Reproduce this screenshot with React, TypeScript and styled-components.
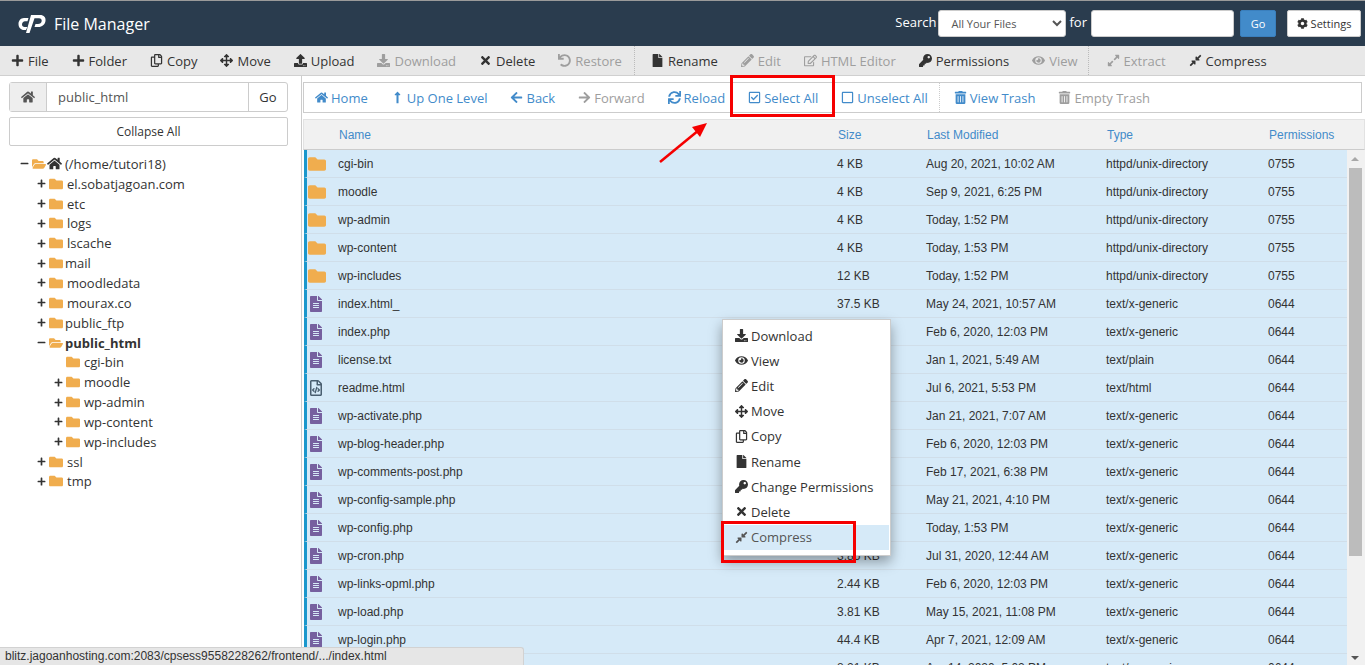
import { ReactNode } from "react";
import styled, { createGlobalStyle } from "styled-components";
import {
  FaArrowLeft, FaArrowRight, FaArrowsAlt, FaCog, FaCompressAlt, FaDownload, FaExpandAlt, FaEye,
  FaFile, FaFileAlt, FaFolder, FaFolderOpen, FaHome, FaKey, FaLongArrowAltUp, FaMinus, FaPencilAlt,
  FaPlus, FaRegCheckSquare, FaRegCopy, FaRegEdit, FaRegFileCode, FaRegSquare, FaSync, FaTimes,
  FaTrashAlt, FaUndo, FaUpload,
} from "react-icons/fa";

const GlobalStyle = createGlobalStyle`
  html, body { margin: 0; padding: 0; height: 665px; overflow: hidden; background: #fff; }
  body { font-family: "Open Sans", "Liberation Sans", sans-serif; font-size: 13px; color: #333; }
  * { box-sizing: border-box; }
`;

const Page = styled.div`
  position: relative;
  width: 1365px;
  height: 665px;
  overflow: hidden;
  display: flex;
  flex-direction: column;
`;

const Header = styled.header`
  height: 46px;
  flex: none;
  border-top: 1px solid #9a9a9a;
  background: #2a3c4e;
  display: flex;
  align-items: center;
  padding: 0 4px 0 18px;
  color: #fff;
`;

const Logo = styled.svg`
  width: 28px;
  height: 20px;
  margin-right: 8px;
`;

const Title = styled.div`
  font-size: 16px;
  flex: 1;
`;

const SearchLabel = styled.label`
  font-size: 13px;
  margin-top: -3px;
`;

const SearchSelect = styled.select`
  width: 128px;
  height: 27px;
  margin: 0 3px 0 2px;
  padding-left: 8px;
  border: 1px solid #ccc;
  border-radius: 3px;
  background: #fff;
  color: #555;
  font: 11px "Open Sans", sans-serif;
`;

const SearchInput = styled.input`
  width: 143px;
  height: 27px;
  margin: 0 6px 0 4px;
  border: 1px solid #ccc;
  border-radius: 3px;
`;

const HeaderButton = styled.button<{ $primary?: boolean }>`
  height: 27px;
  display: flex;
  align-items: center;
  justify-content: center;
  gap: 3px;
  border-radius: 2px;
  border: 1px solid ${(p) => (p.$primary ? "#3a7fbd" : "#ccc")};
  background: ${(p) => (p.$primary ? "#428bca" : "#fff")};
  color: ${(p) => (p.$primary ? "#fff" : "#333")};
  font: 11px "Open Sans", sans-serif;
  width: ${(p) => (p.$primary ? "36px" : "74px")};
  margin-right: ${(p) => (p.$primary ? "11px" : "0")};
  padding: 0;
`;

const Toolbar = styled.nav`
  height: 30px;
  flex: none;
  background: #e8e8e8;
  border-bottom: 1px solid #d0d0d0;
  display: flex;
  align-items: center;
  padding-left: 11px;
`;

const ToolItem = styled.span<{ $disabled?: boolean; $gap?: number }>`
  display: inline-flex;
  align-items: center;
  gap: 4px;
  margin-right: ${(p) => p.$gap ?? 23}px;
  color: ${(p) => (p.$disabled ? "#9e9e9e" : "#333")};
  white-space: nowrap;
  svg { font-size: 13px; flex: none; }
`;

const ToolDivider = styled.span<{ $gap: number }>`
  align-self: stretch;
  width: 0;
  border-left: 1px dotted #bbb;
  margin-right: ${(p) => p.$gap}px;
`;

const Main = styled.main`
  flex: 1;
  min-height: 0;
  display: flex;
`;

const Sidebar = styled.aside`
  width: 302px;
  flex: none;
  padding: 6px 13px 0 9px;
  border-right: 1px solid #ccc;
`;

const PathBar = styled.div`
  height: 30px;
  display: flex;
  border: 1px solid #ccc;
  border-radius: 3px;
`;

const PathIcon = styled.span`
  width: 37px;
  background: #eee;
  border-right: 1px solid #ccc;
  display: flex;
  align-items: center;
  justify-content: center;
  color: #555;
  font-size: 14px;
`;

const PathValue = styled.span`
  flex: 1;
  padding-left: 11px;
  line-height: 28px;
  color: #555;
`;

const PathGo = styled.span`
  width: 39px;
  border-left: 1px solid #ccc;
  text-align: center;
  line-height: 28px;
`;

const CollapseButton = styled.div`
  height: 29px;
  margin-top: 5px;
  border: 1px solid #ccc;
  border-radius: 2px;
  text-align: center;
  line-height: 27px;
  font-size: 12px;
`;

const Tree = styled.ul`
  list-style: none;
  margin: 8px 0 0;
  padding: 0;
`;

const TreeRow = styled.li<{ $level: number }>`
  height: 19.85px;
  display: flex;
  align-items: center;
  padding-left: ${(p) => 12 + p.$level * 17 - 9}px;
  white-space: nowrap;
`;

const Toggle = styled.span`
  width: 12px;
  flex: none;
  display: flex;
  font-size: 9px;
  color: #333;
  margin-left: 8px;
`;

const FolderIcon = styled.span`
  display: flex;
  color: #f0ad4e;
  font-size: 14px;
  flex: none;
`;

const HomeGlyph = styled.span`
  display: flex;
  color: #333;
  font-size: 15px;
  margin: 0 3px 0 1px;
`;

const TreeLabel = styled.span<{ $bold?: boolean; $tight?: boolean }>`
  margin-left: ${(p) => (p.$tight ? 2 : 4)}px;
  font-weight: ${(p) => (p.$bold ? 700 : 400)};
`;

const Content = styled.section`
  flex: 1;
  min-width: 0;
  padding: 6px 3px 0 1px;
  display: flex;
  flex-direction: column;
`;

const NavBar = styled.nav`
  height: 31px;
  flex: none;
  border: 1px solid #ccc;
  display: flex;
  align-items: center;
  padding-left: 11px;
`;

const NavItem = styled.span<{ $disabled?: boolean; $gap?: number; $marked?: boolean }>`
  position: relative;
  display: inline-flex;
  align-items: center;
  gap: 3px;
  margin-right: ${(p) => p.$gap ?? 23}px;
  color: ${(p) => (p.$disabled ? "#9e9e9e" : "#428bca")};
  white-space: nowrap;
  svg { font-size: 13px; flex: none; }
  ${(p) =>
    p.$marked &&
    `&::after {
      content: "";
      position: absolute;
      left: -18px;
      top: -14px;
      width: 99px;
      height: 36px;
      border: 3px solid #f50000;
    }`}
`;

const NavDivider = styled.span`
  align-self: stretch;
  border-left: 1px dotted #ccc;
  margin: 0 14px 0 -12px;
`;

const HeadRow = styled.div`
  height: 31px;
  flex: none;
  margin-top: 6px;
  margin-right: -3px;
  background: #f1f1f1;
  border: 1px solid #e2e2e2;
  border-bottom: 1px solid #ccc;
`;

const Columns = styled.div`
  display: grid;
  grid-template-columns: 35px 499px 89px 180px 162px 1fr;
  align-items: center;
  height: 100%;
  font-family: "Liberation Sans", Arial, sans-serif;
  font-size: 12px;
`;

const HeadCell = styled.span`
  color: #428bca;
  grid-column: auto;
`;

const Body = styled.div`
  flex: 1;
  min-height: 0;
  display: flex;
  overflow: hidden;
  margin-right: -3px;
`;

const Rows = styled.div`
  flex: 1;
  min-width: 0;
  padding-left: 1px;
`;

const Row = styled.div`
  height: 28px;
  background: #d6eaf8;
  border-bottom: 1px solid #d0dee9;
  border-left: 3px solid #1a97cc;
  margin-right: 0;
`;

const RowColumns = styled(Columns)`
  grid-template-columns: 31px 499px 89px 180px 162px 1fr;
`;

const RowIcon = styled.span<{ $kind: string }>`
  display: flex;
  font-size: ${(p) => (p.$kind === "dir" ? 18 : 16)}px;
  padding-left: 1px;
  color: ${(p) => (p.$kind === "dir" ? "#f0ad4e" : p.$kind === "code" ? "#4a5f70" : "#76609f")};
`;

const Scrollbar = styled.div`
  width: 18px;
  flex: none;
  background: #f1f1f1;
  display: flex;
  flex-direction: column;
  align-items: center;
  position: relative;
  padding: 18px 2px 0 0;
`;

const ScrollThumb = styled.div`
  width: 13px;
  height: 388px;
  background: #bcbcbc;
`;

const ScrollArrow = styled.span<{ $down?: boolean }>`
  position: absolute;
  left: 4px;
  ${(p) => (p.$down ? "bottom: 5px;" : "top: 7px;")}
  border-left: 4px solid transparent;
  border-right: 4px solid transparent;
  ${(p) => (p.$down ? "border-top: 4px solid #555;" : "border-bottom: 4px solid #a8a8a8;")}
`;

const ContextMenu = styled.ul`
  position: absolute;
  left: 722px;
  top: 319px;
  width: 169px;
  height: 237px;
  margin: 0;
  padding: 3px 1px 0;
  list-style: none;
  background: #fff;
  border: 1px solid #ccc;
  box-shadow: 0 6px 12px rgba(0, 0, 0, 0.35);
`;

const MenuItem = styled.li<{ $active?: boolean }>`
  position: relative;
  height: 25.2px;
  display: flex;
  align-items: center;
  gap: 3px;
  padding-left: 11px;
  color: ${(p) => (p.$active ? "#555" : "#333")};
  background: ${(p) => (p.$active ? "#d6eaf8" : "transparent")};
  svg { font-size: 13px; flex: none; }
  ${(p) =>
    p.$active &&
    `&::after {
      content: "";
      position: absolute;
      left: -3px;
      top: -4px;
      width: 129px;
      height: 36px;
      border: 3px solid #f50000;
    }`}
`;

const Arrow = styled.svg`
  position: absolute;
  left: 655px;
  top: 118px;
  width: 56px;
  height: 48px;
`;

const StatusBar = styled.div`
  position: absolute;
  left: 0;
  bottom: 0;
  width: 524px;
  height: 18px;
  padding-left: 5px;
  background: #e6e6e6;
  border-top: 1px solid #d2d2d2;
  border-right: 1px solid #d2d2d2;
  border-top-right-radius: 3px;
  font: 12px/17px "Liberation Sans", Arial, sans-serif;
  color: #333;
`;

type Tool = { icon: ReactNode; label: string; disabled?: boolean; gap?: number };

const tools: (Tool | { divider: number })[] = [
  { icon: <FaPlus />, label: "File" },
  { icon: <FaPlus />, label: "Folder" },
  { icon: <FaRegCopy />, label: "Copy" },
  { icon: <FaArrowsAlt />, label: "Move" },
  { icon: <FaUpload />, label: "Upload" },
  { icon: <FaDownload />, label: "Download", disabled: true },
  { icon: <FaTimes />, label: "Delete" },
  { icon: <FaUndo />, label: "Restore", disabled: true, gap: 12 },
  { divider: 16 },
  { icon: <FaFile />, label: "Rename" },
  { icon: <FaPencilAlt />, label: "Edit", disabled: true },
  { icon: <FaRegEdit />, label: "HTML Editor", disabled: true },
  { icon: <FaKey />, label: "Permissions" },
  { icon: <FaEye />, label: "View", disabled: true, gap: 10 },
  { divider: 18 },
  { icon: <FaExpandAlt />, label: "Extract", disabled: true },
  { icon: <FaCompressAlt />, label: "Compress" },
];

const treeItems = [
  { level: 1, name: "el.sobatjagoan.com", toggle: "plus" },
  { level: 1, name: "etc", toggle: "plus" },
  { level: 1, name: "logs", toggle: "plus" },
  { level: 1, name: "lscache", toggle: "plus" },
  { level: 1, name: "mail", toggle: "plus", tight: true },
  { level: 1, name: "moodledata", toggle: "plus" },
  { level: 1, name: "mourax.co", toggle: "plus" },
  { level: 1, name: "public_ftp", toggle: "plus", tight: true },
  { level: 1, name: "public_html", toggle: "minus", open: true, bold: true, tight: true },
  { level: 2, name: "cgi-bin" },
  { level: 2, name: "moodle", toggle: "plus" },
  { level: 2, name: "wp-admin", toggle: "plus" },
  { level: 2, name: "wp-content", toggle: "plus" },
  { level: 2, name: "wp-includes", toggle: "plus" },
  { level: 1, name: "ssl", toggle: "plus" },
  { level: 1, name: "tmp", toggle: "plus" },
];

const dirType = "httpd/unix-directory";
const textType = "text/x-generic";

const files = [
  ["dir", "cgi-bin", "4 KB", "Aug 20, 2021, 10:02 AM", dirType, "0755"],
  ["dir", "moodle", "4 KB", "Sep 9, 2021, 6:25 PM", dirType, "0755"],
  ["dir", "wp-admin", "4 KB", "Today, 1:52 PM", dirType, "0755"],
  ["dir", "wp-content", "4 KB", "Today, 1:53 PM", dirType, "0755"],
  ["dir", "wp-includes", "12 KB", "Today, 1:52 PM", dirType, "0755"],
  ["file", "index.html_", "37.5 KB", "May 24, 2021, 10:57 AM", textType, "0644"],
  ["file", "index.php", "405 bytes", "Feb 6, 2020, 12:03 PM", textType, "0644"],
  ["file", "license.txt", "19.92 KB", "Jan 1, 2021, 5:49 AM", "text/plain", "0644"],
  ["code", "readme.html", "7.34 KB", "Jul 6, 2021, 5:53 PM", "text/html", "0644"],
  ["file", "wp-activate.php", "7.17 KB", "Jan 21, 2021, 7:07 AM", textType, "0644"],
  ["file", "wp-blog-header.php", "351 bytes", "Feb 6, 2020, 12:03 PM", textType, "0644"],
  ["file", "wp-comments-post.php", "2.28 KB", "Feb 17, 2021, 6:38 PM", textType, "0644"],
  ["file", "wp-config-sample.php", "2.91 KB", "May 21, 2021, 4:10 PM", textType, "0644"],
  ["file", "wp-config.php", "3.21 KB", "Today, 1:53 PM", textType, "0644"],
  ["file", "wp-cron.php", "3.85 KB", "Jul 31, 2020, 12:44 AM", textType, "0644"],
  ["file", "wp-links-opml.php", "2.44 KB", "Feb 6, 2020, 12:03 PM", textType, "0644"],
  ["file", "wp-load.php", "3.81 KB", "May 15, 2021, 11:08 PM", textType, "0644"],
  ["file", "wp-login.php", "44.4 KB", "Apr 7, 2021, 12:09 AM", textType, "0644"],
  ["file", "wp-mail.php", "8.21 KB", "Apr 14, 2020, 5:02 PM", textType, "0644"],
];

const menuItems = [
  { icon: <FaDownload />, label: "Download" },
  { icon: <FaEye />, label: "View" },
  { icon: <FaPencilAlt />, label: "Edit" },
  { icon: <FaArrowsAlt />, label: "Move" },
  { icon: <FaRegCopy />, label: "Copy" },
  { icon: <FaFile />, label: "Rename" },
  { icon: <FaKey />, label: "Change Permissions" },
  { icon: <FaTimes />, label: "Delete" },
  { icon: <FaCompressAlt />, label: "Compress", active: true },
];

function rowIcon(kind: string) {
  if (kind === "dir") return <FaFolder />;
  if (kind === "code") return <FaRegFileCode />;
  return <FaFileAlt />;
}

export default function App() {
  return (
    <Page>
      <GlobalStyle />
      <Header>
        <Logo viewBox="0 0 28 20">
          <path
            fill="#fff"
            d="M10.5 4H6C2.6 4 .5 6.8.5 10c0 3.6 2.4 6 5.5 6h2l1.4-3H6.6C5 13 4 12 4 10.500 4 8.700 5.400 7.300 7 7.300h2.500z"
          />
          <path
            fill="#fff"
            d="M13 1h9c4 0 6 2.500 5.500 6-.5 3.500-3.500 6-7 6h-4l1-3H20c2 0 3.500-1.200 3.700-3 .2-1.700-.9-2.800-2.700-2.800h-4.500L11.500 19H8z"
          />
        </Logo>
        <Title>File Manager</Title>
        <SearchLabel>Search</SearchLabel>
        <SearchSelect defaultValue="all">
          <option value="all">All Your Files</option>
        </SearchSelect>
        <SearchLabel>for</SearchLabel>
        <SearchInput />
        <HeaderButton $primary>Go</HeaderButton>
        <HeaderButton>
          <FaCog /> Settings
        </HeaderButton>
      </Header>

      <Toolbar>
        {tools.map((t, i) =>
          "divider" in t ? (
            <ToolDivider key={i} $gap={t.divider} />
          ) : (
            <ToolItem key={t.label} $disabled={t.disabled} $gap={t.gap}>
              {t.icon}
              {t.label}
            </ToolItem>
          )
        )}
      </Toolbar>

      <Main>
        <Sidebar>
          <PathBar>
            <PathIcon>
              <FaHome />
            </PathIcon>
            <PathValue>public_html</PathValue>
            <PathGo>Go</PathGo>
          </PathBar>
          <CollapseButton>Collapse All</CollapseButton>
          <Tree>
            <TreeRow $level={0}>
              <Toggle>
                <FaMinus />
              </Toggle>
              <FolderIcon>
                <FaFolderOpen />
              </FolderIcon>
              <HomeGlyph>
                <FaHome />
              </HomeGlyph>
              (/home/tutori18)
            </TreeRow>
            {treeItems.map((item) => (
              <TreeRow key={item.name} $level={item.level}>
                <Toggle>
                  {item.toggle === "plus" && <FaPlus />}
                  {item.toggle === "minus" && <FaMinus />}
                </Toggle>
                <FolderIcon>{item.open ? <FaFolderOpen /> : <FaFolder />}</FolderIcon>
                <TreeLabel $bold={item.bold} $tight={item.tight}>
                  {item.name}
                </TreeLabel>
              </TreeRow>
            ))}
          </Tree>
        </Sidebar>

        <Content>
          <NavBar>
            <NavItem><FaHome />Home</NavItem>
            <NavItem><FaLongArrowAltUp />Up One Level</NavItem>
            <NavItem><FaArrowLeft />Back</NavItem>
            <NavItem $disabled><FaArrowRight />Forward</NavItem>
            <NavItem><FaSync />Reload</NavItem>
            <NavItem $marked><FaRegCheckSquare />Select All</NavItem>
            <NavItem><FaRegSquare />Unselect All</NavItem>
            <NavDivider />
            <NavItem><FaTrashAlt />View Trash</NavItem>
            <NavItem $disabled><FaTrashAlt />Empty Trash</NavItem>
          </NavBar>
          <HeadRow>
            <Columns>
              <span />
              <HeadCell>Name</HeadCell>
              <HeadCell>Size</HeadCell>
              <HeadCell>Last Modified</HeadCell>
              <HeadCell>Type</HeadCell>
              <HeadCell>Permissions</HeadCell>
            </Columns>
          </HeadRow>
          <Body>
            <Rows>
              {files.map(([kind, name, size, modified, type, perms]) => (
                <Row key={name}>
                  <RowColumns>
                    <RowIcon $kind={kind}>{rowIcon(kind)}</RowIcon>
                    <span>{name}</span>
                    <span>{size}</span>
                    <span>{modified}</span>
                    <span>{type}</span>
                    <span>{perms}</span>
                  </RowColumns>
                </Row>
              ))}
            </Rows>
            <Scrollbar>
              <ScrollArrow />
              <ScrollThumb />
              <ScrollArrow $down />
            </Scrollbar>
          </Body>
        </Content>
      </Main>

      <ContextMenu>
        {menuItems.map((m) => (
          <MenuItem key={m.label} $active={m.active}>
            {m.icon}
            {m.label}
          </MenuItem>
        ))}
      </ContextMenu>

      <Arrow viewBox="0 0 56 48">
        <line x1="5" y1="44" x2="44" y2="12" stroke="#f50000" strokeWidth="2.500" />
        <polygon points="52,5 45,19 37,9" fill="#f50000" />
      </Arrow>

      <StatusBar>blitz.jagoanhosting.com:2083/cpsess9558228262/frontend/.../index.html</StatusBar>
    </Page>
  );
}
